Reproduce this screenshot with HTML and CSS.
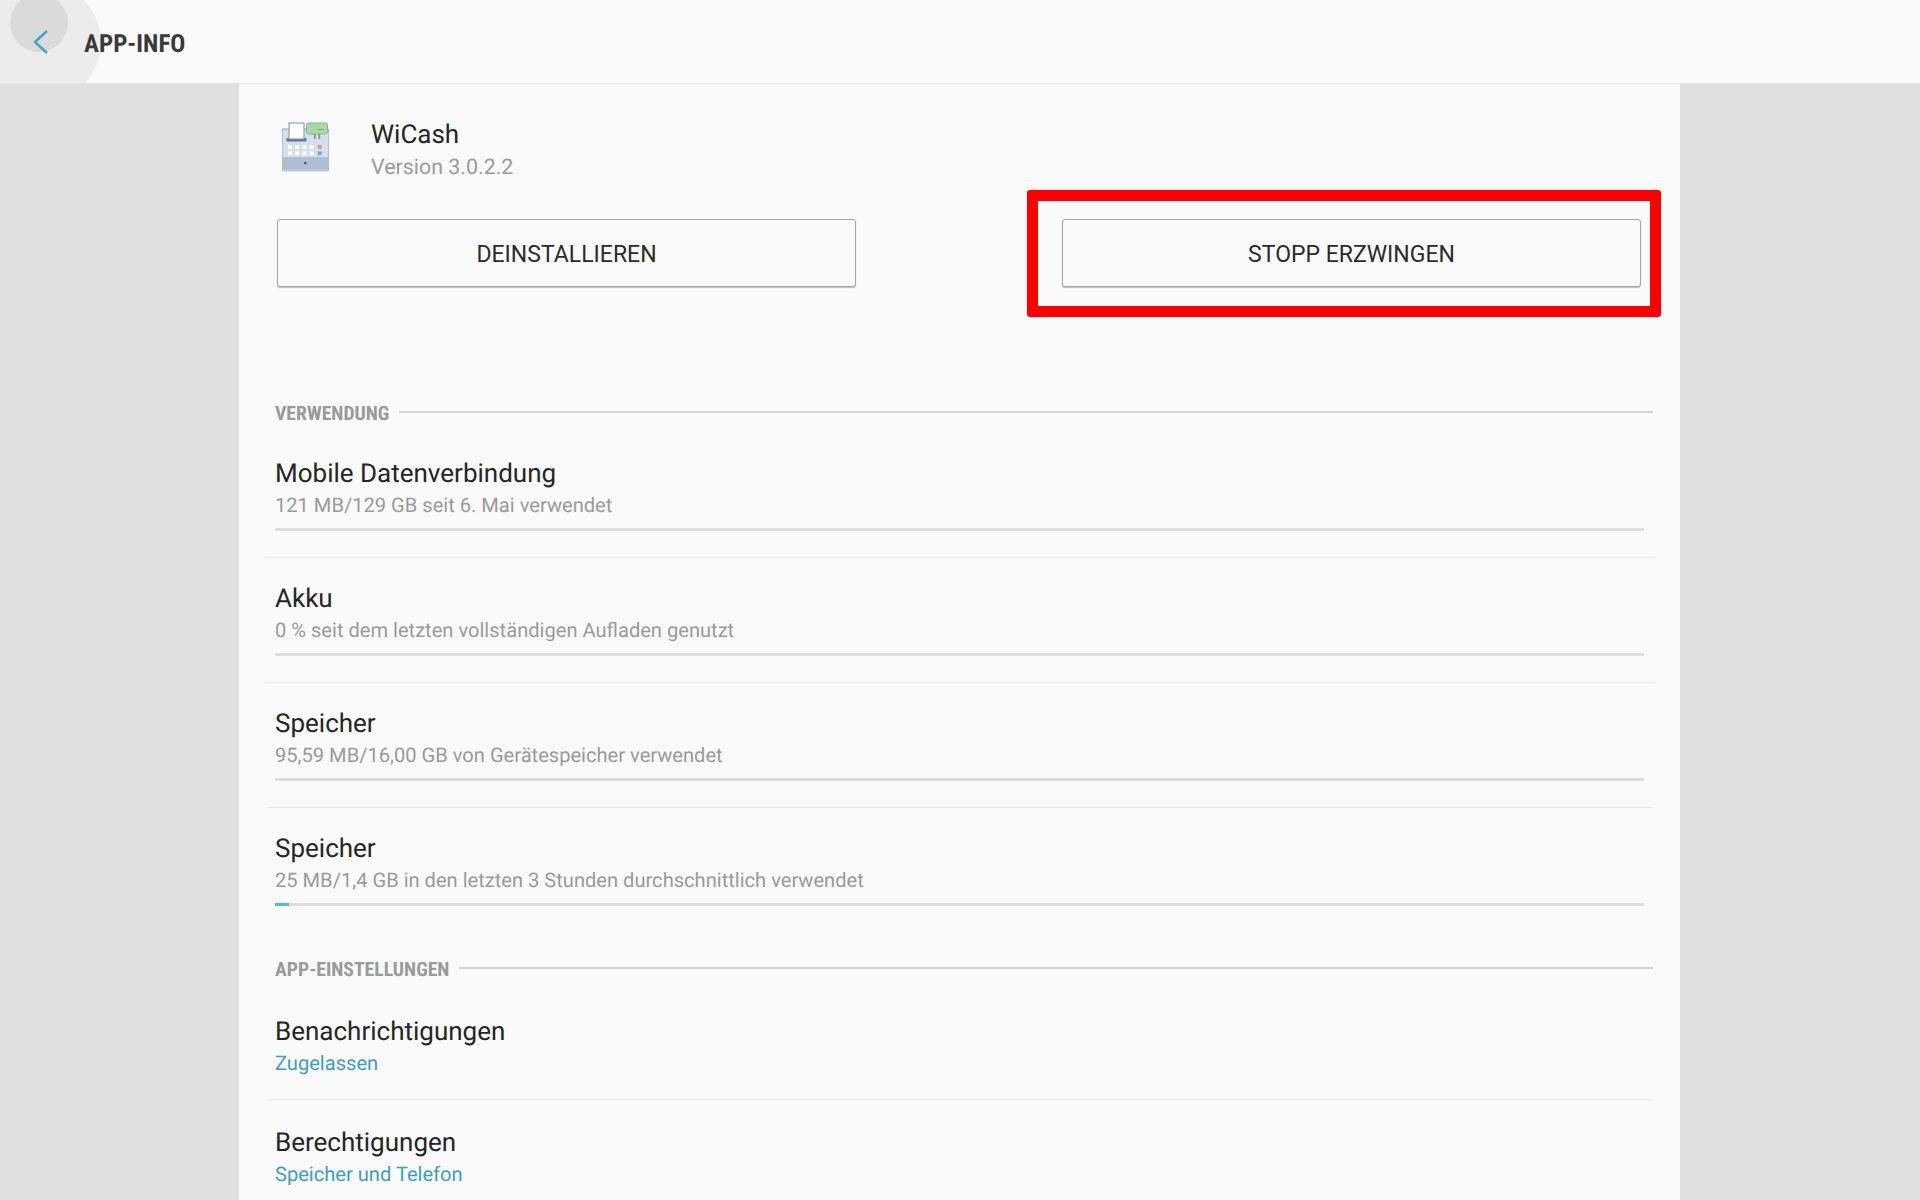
FILE: index.html
```html
<!DOCTYPE html>
<html lang="de">
<head>
<meta charset="utf-8">
<title>App-Info</title>
<link rel="stylesheet" href="styles.css">
</head>
<body>
<header class="topbar">
  <span class="ripple-outer"></span>
  <span class="ripple-inner"></span>
  <button class="back" aria-label="Zurück">
    <svg width="16" height="24" viewBox="0 0 16 24"><path d="M14 1 2 12l12 11" fill="none" stroke="#3fa3c6" stroke-width="2.4"/></svg>
  </button>
  <h1 class="bar-title">APP-INFO</h1>
</header>
<main class="panel">
  <section class="app-head">
    <svg class="app-icon" width="47" height="50" viewBox="0 0 47 50">
      <path d="M2 7h43a2 2 0 0 1 2 2v37a2 2 0 0 1-2 2H2a2 2 0 0 1-2-2V9a2 2 0 0 1 2-2z" fill="#d5e0ea" stroke="#8fa2b8"/>
      <path d="M0 35h47v11a2 2 0 0 1-2 2H2a2 2 0 0 1-2-2z" fill="#aebfd4"/>
      <rect x="0" y="47.5" width="47" height="2" rx="1" fill="#c4c9cf"/>
      <rect x="4.5" y="16" width="20" height="3.4" rx="1" fill="#5f7796"/>
      <rect x="7" y="1" width="15" height="16" fill="#fff" stroke="#7f8fa1"/>
      <rect x="32" y="11" width="1.6" height="6" fill="#7d8fa3"/>
      <rect x="36.5" y="11" width="1.6" height="6" fill="#7d8fa3"/>
      <rect x="24.5" y="1" width="21" height="11" rx="2" fill="#abd8a8" stroke="#7fb98b"/>
      <rect x="36" y="7" width="6" height="1" fill="#6f9f7c"/>
      <g fill="#fff">
        <rect x="6" y="23" width="3.8" height="3.8"/><rect x="13.3" y="23" width="3.8" height="3.8"/><rect x="20.6" y="23" width="3.8" height="3.8"/><rect x="27.8" y="23" width="3.8" height="3.8"/>
        <rect x="6" y="29.4" width="3.8" height="3.8"/><rect x="13.3" y="29.4" width="3.8" height="3.8"/><rect x="20.6" y="29.4" width="3.8" height="3.8"/><rect x="27.8" y="29.4" width="3.8" height="3.8"/>
      </g>
      <rect x="35.8" y="23" width="4" height="3.8" fill="#ee8f8f"/>
      <rect x="35.8" y="29.4" width="4" height="3.8" fill="#72a7ec"/>
      <circle cx="23.3" cy="41" r="1.3" fill="#44546a"/>
    </svg>
    <div class="app-text">
      <div class="app-name">WiCash</div>
      <div class="sub version">Version 3.0.2.2</div>
    </div>
  </section>
  <section class="actions">
    <button class="btn">DEINSTALLIEREN</button>
    <div class="btn-wrap">
      <button class="btn">STOPP ERZWINGEN</button>
      <span class="mark"></span>
    </div>
  </section>
  <h2 class="section-head"><span>VERWENDUNG</span></h2>
  <div class="row usage">
    <div class="title">Mobile Datenverbindung</div>
    <div class="sub">121 MB/129 GB seit 6. Mai verwendet</div>
    <div class="bar"></div>
  </div>
  <div class="row usage">
    <div class="title">Akku</div>
    <div class="sub">0 % seit dem letzten vollständigen Aufladen genutzt</div>
    <div class="bar"></div>
  </div>
  <div class="row usage">
    <div class="title">Speicher</div>
    <div class="sub">95,59 MB/16,00 GB von Gerätespeicher verwendet</div>
    <div class="bar"></div>
  </div>
  <div class="row usage last">
    <div class="title">Speicher</div>
    <div class="sub">25 MB/1,4 GB in den letzten 3 Stunden durchschnittlich verwendet</div>
    <div class="bar"><div class="bar-fill"></div></div>
  </div>
  <h2 class="section-head second"><span>APP-EINSTELLUNGEN</span></h2>
  <div class="row setting">
    <div class="title">Benachrichtigungen</div>
    <div class="sub link">Zugelassen</div>
  </div>
  <div class="row setting last">
    <div class="title">Berechtigungen</div>
    <div class="sub link">Speicher und Telefon</div>
  </div>
</main>
</body>
</html>
```
FILE: styles.css
```css
* { box-sizing: border-box; }
html, body { margin: 0; height: 1200px; overflow: hidden; }
body { background: #e0e0e0; font-family: Roboto, "Noto Sans", sans-serif; color: #252525; text-rendering: geometricPrecision; }

.topbar {
  position: relative;
  height: 84px;
  background: #fafafa;
  border-bottom: 1px solid #e4e4e4;
  display: flex;
  align-items: center;
  overflow: hidden;
}
.ripple-outer { position: absolute; left: -19px; top: -18px; width: 120px; height: 120px; border-radius: 50%; background: #ececec; }
.ripple-inner { position: absolute; left: 10px; top: -6px; width: 58px; height: 58px; border-radius: 50%; background: #dadada; }
.back { position: relative; margin-left: 33px; width: 16px; height: 24px; padding: 0; background: none; border: 0; display: flex; }
.bar-title { position: relative; margin: 6px 0 0 35px; font-size: 25px; font-weight: 700; color: #3a3a3a; font-stretch: condensed; }

.panel { width: 1441px; height: 1116px; margin-left: 239px; background: #fafafa; padding: 0 27px 0 28px; }

.app-head { display: flex; padding: 32px 0 0 15px; height: 135px; }
.app-icon { flex: none; margin-top: 6px; }
.app-text { margin-left: 42px; }
.app-name { font-size: 26px; line-height: 34px; margin-top: 2px; color: #252525; }

.sub { font-size: 20.1px; line-height: 28px; color: #9a9a9a; }
.link { color: #3d9fc2; }
.sub.version { margin-top: 2px; font-size: 21.4px; }

.actions { display: flex; justify-content: space-between; padding: 0 12px 0 10px; height: 173px; }
.btn {
  width: 579px;
  height: 68px;
  background: #fafafa;
  border: 1px solid #a6a6a6;
  border-radius: 3px;
  box-shadow: 0 1px 1px rgba(0, 0, 0, 0.25);
  font: 400 23px Roboto, sans-serif;
  color: #2b2b2b;
  padding-top: 3px;
}
.btn-wrap { position: relative; height: 68px; }
.mark { position: absolute; left: -35px; top: -29px; right: -20px; bottom: -30px; border: 11px solid #f00; border-radius: 3px; pointer-events: none; }

.section-head {
  display: flex;
  align-items: center;
  gap: 10px;
  margin: 0 0 1px 8px;
  height: 40px;
  font-size: 19.7px;
  font-weight: 700;
  font-stretch: condensed;
  color: #9a9a9a;
}
.section-head span { padding-top: 2px; }
.section-head.second { margin-top: 15px; }
.section-head::after { content: ""; flex: 1; height: 2px; background: #d2d2d2; }

.row { padding: 0 8px; border-bottom: 1px solid #e6e6e6; }
.row.last { border-bottom: 0; }
.usage { height: 125px; padding-top: 24px; }
.setting { height: 111px; padding-top: 26px; }
.title { font-size: 26px; line-height: 34px; color: #252525; }
.bar { height: 3px; margin-top: 9px; margin-right: 1px; background: #dedede; }
.bar-fill { width: 14px; height: 3px; background: #55b9dc; }
```
